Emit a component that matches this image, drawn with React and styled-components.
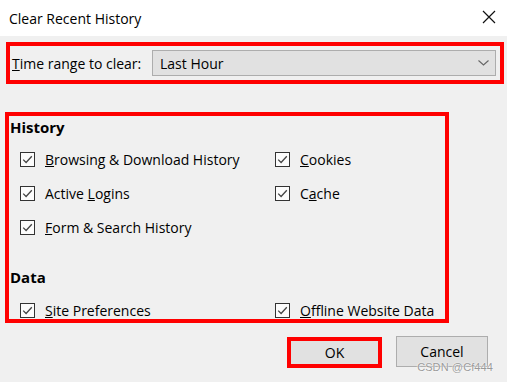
import React from "react";
import styled, { createGlobalStyle } from "styled-components";

const GlobalStyle = createGlobalStyle`
  html, body {
    margin: 0;
    padding: 0;
    background: #f0f0f0;
  }
  body {
    font-family: "Open Sans", "Noto Sans", "DejaVu Sans", sans-serif;
    color: #000;
  }
`;

const Dialog = styled.div`
  position: relative;
  width: 507px;
  height: 382px;
  background: #f0f0f0;
  overflow: hidden;
`;

const TitleBar = styled.div`
  height: 36px;
  background: #fff;
  display: flex;
  align-items: center;
  justify-content: space-between;
  padding: 0 10px 0 9px;
  box-sizing: border-box;
  font-size: 14px;
`;

const CloseButton = styled.button`
  width: 16px;
  height: 16px;
  padding: 0;
  border: none;
  background: none;
  display: flex;
  align-items: center;
  justify-content: center;
  margin-top: -2px;
`;

const Body = styled.div`
  padding: 6px 3px 0 5px;
`;

const Marked = styled.div`
  border: 4px solid #ff0000;
  box-sizing: border-box;
  margin-left: ${(p) => p.$left || 0}px;
  width: ${(p) => p.$width}px;
`;

const RangeRow = styled.div`
  display: flex;
  align-items: center;
  height: 34px;
  padding: 0 4px 0 2px;
  font-size: 14px;
`;

const RangeLabel = styled.label`
  width: 140px;
  white-space: nowrap;
`;

const Select = styled.div`
  flex: 1;
  height: 26px;
  box-sizing: border-box;
  border: 1px solid #adadad;
  background: #e1e1e1;
  display: flex;
  align-items: center;
  justify-content: space-between;
  padding: 0 6px 0 7px;
`;

const Groups = styled.div`
  margin-top: 28px;
`;

const Heading = styled.div`
  font-weight: 700;
  font-size: 15px;
  height: 22px;
  line-height: 22px;
  padding-left: 1px;
  margin-top: ${(p) => p.$top || 0}px;
`;

const Grid = styled.div`
  display: grid;
  grid-template-columns: 255px 1fr;
  grid-auto-rows: 18px;
  row-gap: 16px;
  padding-left: 11px;
  margin-top: ${(p) => p.$top || 0}px;
`;

const Option = styled.label`
  display: flex;
  align-items: center;
  gap: 10px;
  font-size: 14px;
  white-space: nowrap;
  grid-column: ${(p) => p.$col || "auto"};
  grid-row: ${(p) => p.$row || "auto"};
`;

const Box = styled.span`
  width: 15px;
  height: 15px;
  box-sizing: border-box;
  border: 1px solid #333;
  background: #fcfcfc;
  display: flex;
  align-items: center;
  justify-content: center;
  flex: none;
`;

const Buttons = styled.div`
  display: flex;
  justify-content: flex-end;
  gap: 14px;
  padding-right: 16px;
  margin-top: 13px;
`;

const Button = styled.button`
  height: 31px;
  width: ${(p) => (p.$marked ? 95 : 92)}px;
  box-sizing: border-box;
  border: ${(p) => (p.$marked ? "4px solid #ff0000" : "1px solid #adadad")};
  background: #e1e1e1;
  font-family: inherit;
  font-size: 14px;
  color: #000;
  padding: 0;
  margin-top: ${(p) => (p.$marked ? 1 : 0)}px;
`;

const Watermark = styled.span`
  position: absolute;
  right: 14px;
  bottom: 9px;
  font-family: "Liberation Sans", Arial, sans-serif;
  font-size: 11px;
  color: #9a9a9a;
  text-shadow: 0 0 2px #fff, 0 0 1px #fff;
  letter-spacing: 0.1px;
`;

function Check() {
  return (
    <Box>
      <svg width="11" height="11" viewBox="0 0 11 11">
        <path d="M1.2 5.6 L4.1 8.5 L9.8 2.3" fill="none" stroke="#444" strokeWidth="1.3" />
      </svg>
    </Box>
  );
}

function Item({ children, col, row }) {
  return (
    <Option $col={col} $row={row}>
      <Check />
      <span>{children}</span>
    </Option>
  );
}

export default function App() {
  return (
    <Dialog>
      <GlobalStyle />
      <TitleBar>
        <span>Clear Recent History</span>
        <CloseButton aria-label="Close">
          <svg width="14" height="14" viewBox="0 0 14 14">
            <path d="M1 1 L13 13 M13 1 L1 13" stroke="#111" strokeWidth="1.2" />
          </svg>
        </CloseButton>
      </TitleBar>
      <Body>
        <Marked $left={1} $width={498}>
          <RangeRow>
            <RangeLabel>
              <u>T</u>ime range to clear:
            </RangeLabel>
            <Select>
              <span>Last Hour</span>
              <svg width="11" height="6" viewBox="0 0 11 6">
                <path d="M0.5 0.5 L5.5 5 L10.5 0.5" fill="none" stroke="#666" strokeWidth="1.1" />
              </svg>
            </Select>
          </RangeRow>
        </Marked>
        <Groups>
          <Marked $width={444}>
            <Heading>History</Heading>
            <Grid $top={12}>
              <Item col={1} row={1}>
                <u>B</u>rowsing &amp; Download History
              </Item>
              <Item col={1} row={2}>
                Active <u>L</u>ogins
              </Item>
              <Item col={1} row={3}>
                <u>F</u>orm &amp; Search History
              </Item>
              <Item col={2} row={1}>
                <u>C</u>ookies
              </Item>
              <Item col={2} row={2}>
                C<u>a</u>che
              </Item>
            </Grid>
            <Heading $top={30}>Data</Heading>
            <Grid $top={13}>
              <Item>
                <u>S</u>ite Preferences
              </Item>
              <Item>
                <u>O</u>ffline Website Data
              </Item>
            </Grid>
          </Marked>
        </Groups>
        <Buttons>
          <Button $marked>OK</Button>
          <Button>Cancel</Button>
        </Buttons>
      </Body>
      <Watermark>CSDN @Cf444</Watermark>
    </Dialog>
  );
}
